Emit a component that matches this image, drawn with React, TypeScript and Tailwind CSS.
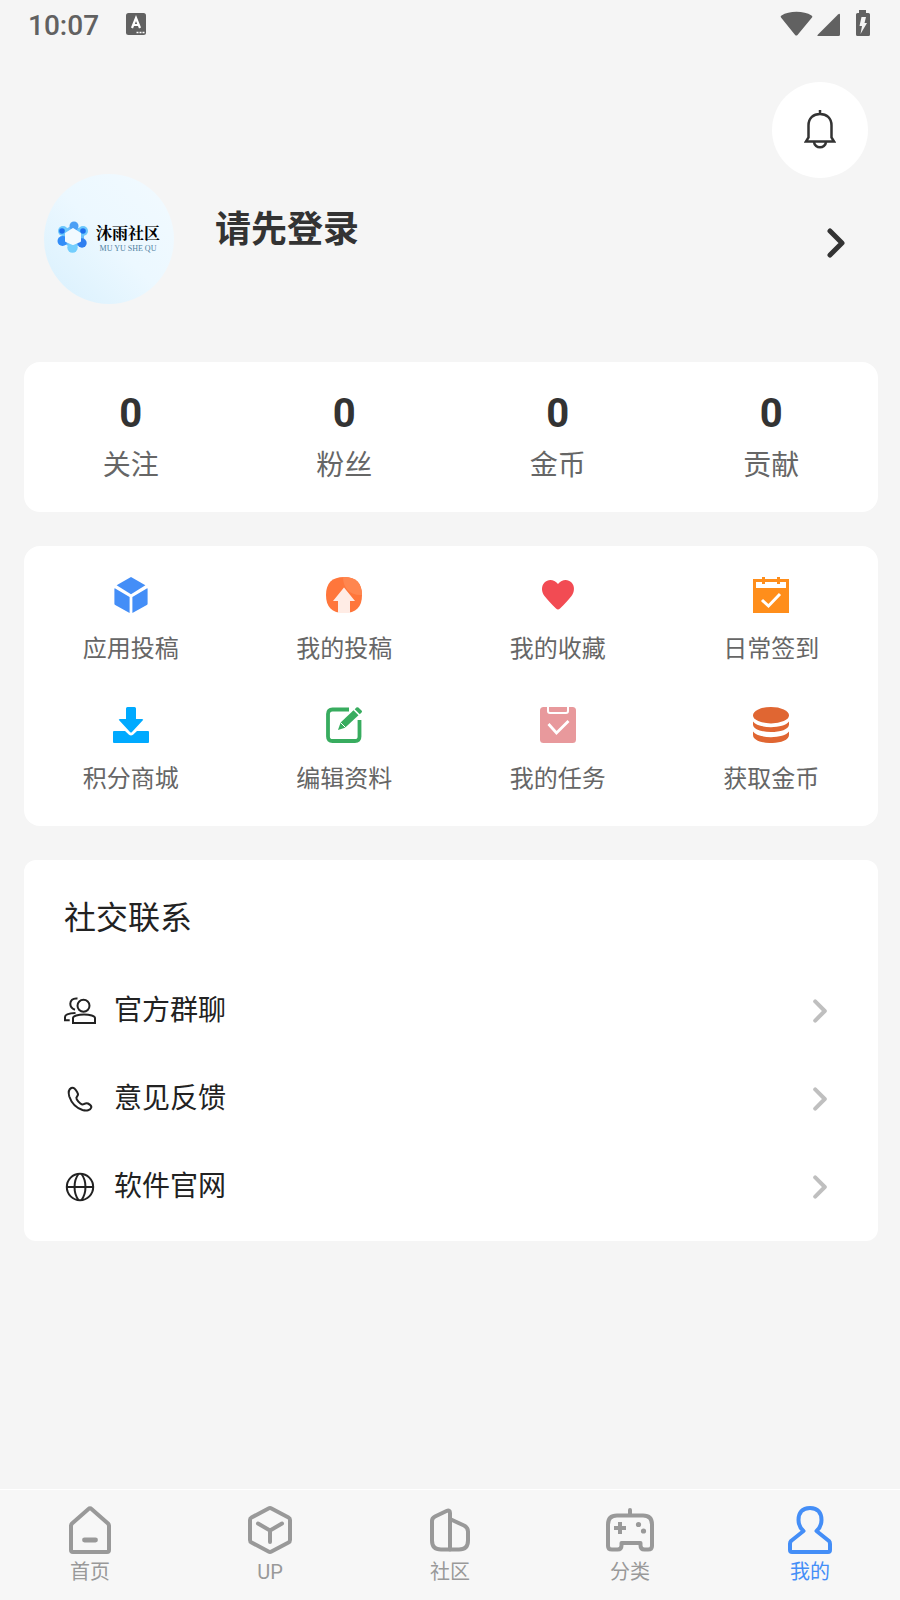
import type { ReactNode } from "react";

interface Item {
  label: string;
  icon: ReactNode;
}

const stats = [
  { label: "关注", value: 0 },
  { label: "粉丝", value: 0 },
  { label: "金币", value: 0 },
  { label: "贡献", value: 0 },
];

const actions: Item[] = [
  {
    label: "应用投稿",
    icon: (
      <g fill="#448ef7">
        <path d="M18 0 32.4 8.2 18 17.2 3.6 8.2z" />
        <path d="M2.2 11.4 16.6 20v16L2.2 28q-.8-.4-.8-1.200V12q0-1 .8-.6z" />
        <path d="M33.8 11.400 19.400 20v16l14.400-8q.8-.4.8-1.200V12q0-1-.8-.6z" />
      </g>
    ),
  },
  {
    label: "我的投稿",
    icon: (
      <>
        <path fill="#ff763b" d="M18 0C30 0 36 6 36 18s-6 18-18 18S0 30 0 18 6 0 18 0z" />
        <path fill="#ff864f" d="M17 0c12-.4 18.700 5 19 18C25 19 17 12 17 0z" />
        <path fill="#ffece5" d="M18 10.500 29 24h-5v12H12V24H7z" />
      </>
    ),
  },
  {
    label: "我的收藏",
    icon: (
      <path
        fill="#f24b53"
        d="M18 7C14 2 8 2 4.500 5.500 1 9 1.400 15 4.500 19c3 4 7.500 8.500 11.500 12.600q2 2 4 0c4-4.100 8.500-8.600 11.500-12.600 3.100-4 3.500-10 0-13.500C28 2 22 2 18 7z"
      />
    ),
  },
  {
    label: "日常签到",
    icon: (
      <>
        <path fill="#ff8e1b" d="M0 2h9V0h3v2h12V0h3v2h9v34H0z" />
        <path fill="#fff" d="M3 5h6v2h3V5h12v2h3V5h6v6H3z" />
        <path d="m9 23 6.500 6L27 17" fill="none" stroke="#fff" strokeWidth="3" />
      </>
    ),
  },
  {
    label: "积分商城",
    icon: (
      <g fill="#00aaff">
        <path d="M14.500 0h7q1.500 0 1.500 1.500V12h6q2 0 .6 1.600L19 25q-1 1-2 0L6.400 13.600Q5 12 7 12h6V1.500Q13 0 14.500 0z" />
        <path d="M1 24h11l4 3.700q2 1.500 4 0L24 24h11q1 0 1 1v10q0 1-1 1H1q-1 0-1-1V25q0-1 1-1z" />
      </g>
    ),
  },
  {
    label: "编辑资料",
    icon: (
      <>
        <path d="M23 2.500H6.500q-4.500 0-4.500 4.500v22.500q0 4.500 4.500 4.500h22.500q4.500 0 4.500-4.500V13" fill="none" stroke="#38ac5f" strokeWidth="3.800" />
        <path fill="#38ac5f" d="m12 23 2.600-7.500L27.500 3.300l5 5L19 20.700z" />
        <path fill="#38ac5f" d="M28.700 2.200 30.400.6q1-.9 2 0l3.100 3q1 1 0 2l-1.700 1.700z" />
        <path d="m14.400 15.400 5.200 5.200" stroke="#fff" strokeWidth="1" />
      </>
    ),
  },
  {
    label: "我的任务",
    icon: (
      <>
        <rect width="36" height="36" rx="3.500" fill="#e8999c" />
        <path d="M8 0v4q0 2 2 2h16q2 0 2-2V0" fill="none" stroke="#fff" strokeWidth="2" />
        <path d="m8.500 17 8 9L28.500 14" fill="none" stroke="#fff" strokeWidth="2.800" />
      </>
    ),
  },
  {
    label: "获取金币",
    icon: (
      <g fill="#e06632">
        <ellipse cx="18" cy="8.200" rx="18" ry="8.200" />
        <path d="M0 14.500c5 7.500 31 7.500 36 0v3c0 10-36 10-36 0z" />
        <path d="M0 24.500c5 7.500 31 7.500 36 0V28c0 10.700-36 10.700-36 0z" />
      </g>
    ),
  },
];

const contacts: Item[] = [
  {
    label: "官方群聊",
    icon: (
      <>
        <circle cx="19.500" cy="10.700" r="6" />
        <path d="M9 28v-5c0-2 5-3.500 11-3.500s11 1.500 11 3.500v5z" />
        <path d="M13.500 3.500c-5-.6-7.200 2-7.200 5.300 0 3 1.700 5 4.700 6M11.500 18C5 18.300 1 19.500 1 22v3.300h4.700" />
      </>
    ),
  },
  {
    label: "意见反馈",
    icon: (
      <path d="M7.300 5C4.500 6.500 4.300 10 5.300 13.500 7.500 20 12.500 25 18.500 27c4 1.200 8 .3 8.800-2.500.4-1.500-1-2.800-3.300-4-2-1-3 0-4.300.7-1 .6-2 .3-3.300-.7-1.700-1.300-2.700-2.500-3.700-4.300-.7-1.300-.5-2 .5-3s1.200-2 .2-3.700C11.500 6 9.500 3.800 7.300 5z" />
    ),
  },
  {
    label: "软件官网",
    icon: (
      <>
        <circle cx="16" cy="16" r="13.200" />
        <path d="M2.800 16h26.400M14.500 3c-5.300 7-5.300 19 0 26M17.500 3c5.300 7 5.300 19 0 26" />
      </>
    ),
  },
];

const tabs: Item[] = [
  {
    label: "首页",
    icon: (
      <>
        <path d="M22.500 3 6 17.500Q5 18.500 5 20v24q0 2 2 2h34q2 0 2-2V20q0-1.500-1-2.500L25.500 3Q24 1.500 22.500 3z" />
        <path d="M18.500 34h11" strokeWidth="4.800" />
      </>
    ),
  },
  {
    label: "UP",
    icon: (
      <>
        <path d="m22.500 2.500-17 9Q4 12.300 4 14v20q0 1.700 1.500 2.500l17 9q1.500.8 3 0l17-9Q44 35.700 44 34V14q0-1.700-1.500-2.500l-17-9q-1.500-.8-3 0z" />
        <path d="m12 17.500 12 7 12-7M24 24.500V36" />
      </>
    ),
  },
  {
    label: "社区",
    icon: (
      <>
        <path d="M24 43.500H15q-9 0-9-9V15q0-3 3-4.500l11.500-5.500Q24 3.500 24 7z" />
        <path d="m24 13 14 6.500q4 2 4 6v9q0 9-9 9H24" />
      </>
    ),
  },
  {
    label: "分类",
    icon: (
      <>
        <path d="M11 9.500h26q9 0 9 9V40q0 3.500-4 3.500h-3.500q-4 0-4-4V37h-19v2.500q0 4-4 4H6q-4 0-4-3.500V18.500q0-9 9-9zM24 4v5" />
        <path d="M14 16v12M8 22h12" strokeLinecap="butt" />
        <g fill="currentColor" stroke="none">
          <circle cx="32.500" cy="18.500" r="2.600" />
          <circle cx="37.500" cy="25" r="2.600" />
        </g>
      </>
    ),
  },
  {
    label: "我的",
    icon: (
      <path d="M24 2C16 2 12.500 7 12.500 14c0 4.500 1.500 8 5 11L5 35Q4 36 4 38v6q0 2 2 2h36q2 0 2-2v-6q0-2-1-3L30.500 25c3.500-3 5-6.500 5-11C35.500 7 32 2 24 2z" />
    ),
  },
];

function Chevron({ className }: { className: string }) {
  return (
    <svg viewBox="0 0 18 30" fill="none" stroke="currentColor" strokeLinecap="round" strokeLinejoin="round" className={className} aria-hidden="true">
      <path d="m3 3 12 12L3 27" strokeWidth="5" />
    </svg>
  );
}

function StatusBar() {
  return (
    <div className="flex h-[50px] items-start justify-between pt-2.5 pr-[30px] pl-7 text-[#616161]">
      <div className="flex items-center gap-[27px]">
        <span className="text-[28px] leading-8 font-medium">10:07</span>
        <svg viewBox="0 0 20 22" className="mb-1 h-[22px] w-5" aria-hidden="true">
          <rect width="20" height="22" rx="2.500" fill="currentColor" />
          <path d="m6 15 4-10 4 10M7.500 12h5" fill="none" stroke="#fff" strokeWidth="2.200" />
          <path d="M10.500 19.500h8" stroke="#fff" strokeWidth="1.500" strokeDasharray="2 1" />
        </svg>
      </div>
      <svg viewBox="0 0 90 26" fill="currentColor" className="h-[26px] w-[90px]" aria-hidden="true">
        <path d="M1.500 5.500C9 .5 24 .5 31.500 5.500 32.500 6 32.500 7 32 7.500L17.500 25q-1.200 1-2.400 0L1 7.500Q0 6 1.500 5.500z" />
        <path d="M60 5v19.500q0 1.500-1.500 1.500h-20q-2 0-.5-1.500L58 4.500q2-1.500 2 .5z" />
        <path d="M79 0h7v3h2.500q1.500 0 1.500 1.500v20q0 1.500-1.500 1.500h-11q-1.500 0-1.500-1.500v-20Q76 3 77.500 3H79z" />
        <path fill="#f5f5f5" d="M81.500 7H86l-1.500 6H87l-6.500 11L82 16h-2.500z" />
      </svg>
    </div>
  );
}

function Avatar() {
  return (
    <div className="flex size-[130px] shrink-0 items-center gap-[7px] rounded-full bg-linear-to-tr from-[#d8f0fd] via-[#ecf8ff] to-[#f2faff] pb-1 pl-[13px]">
      <svg viewBox="0 0 32 32" className="size-8 shrink-0" aria-hidden="true">
        <path d="M16 4 27 10v12l-11 5-11-5V10z" fill="#6cc0fb" />
        <circle cx="17" cy="5" r="4.500" fill="#4b9ff5" />
        <circle cx="6" cy="10" r="5" fill="#6cc8fc" />
        <circle cx="26" cy="10" r="5" fill="#6cc8fc" />
        <circle cx="5" cy="10" r="2.800" fill="#1e6fee" />
        <circle cx="26" cy="10" r="2.800" fill="#1e6fee" />
        <circle cx="5.500" cy="20" r="5" fill="#328df8" />
        <circle cx="25" cy="22" r="4.700" fill="#2f7ff0" />
        <circle cx="15.500" cy="26.500" r="5.200" fill="#73cefd" />
        <path d="m16 8 7 4.500v7.500L16 23l-7-3v-7.500z" fill="#f2faff" stroke="#f2faff" strokeWidth="2" strokeLinejoin="round" />
      </svg>
      <div className="pt-1 text-center font-['Noto_Serif_CJK_SC','Noto_Sans_CJK_SC',serif] whitespace-nowrap">
        <div className="text-[16px] leading-5 font-bold text-black">沐雨社区</div>
        <div className="font-['Liberation_Serif',serif] text-[8px] leading-3 text-[#4d7f9f]">MU YU SHE QU</div>
      </div>
    </div>
  );
}

export default function App() {
  return (
    <div className="flex min-h-screen flex-col bg-[#f5f5f5] font-[Roboto,'Noto_Sans_CJK_SC',sans-serif] text-[#333]" lang="zh-CN">
      <StatusBar />

      <header className="pt-8">
        <div className="flex justify-end pr-8">
          <button type="button" aria-label="通知" className="flex size-24 items-center justify-center rounded-full bg-white">
            <svg viewBox="0 0 32 40" fill="none" stroke="currentColor" strokeWidth="2.500" className="h-10 w-8" aria-hidden="true">
              <path d="M16 0v4M4.500 27.500V15.500C4.500 8 9.500 4 16 4S27.500 8 27.500 15.500V27.500l2.500 4H2z" />
              <path d="M10 32c.8 7 11.200 7 12 0" />
            </svg>
          </button>
        </div>
        <a href="#login" className="-mt-1 flex items-start pr-[55px] pl-11">
          <Avatar />
          <span className="ml-[41px] flex-1 pt-9 text-[36px] leading-10 font-bold">请先登录</span>
          <Chevron className="mt-2 h-[30px] w-[18px] self-center" />
        </a>
      </header>

      <main className="flex flex-col gap-[34px] pt-[58px] pr-[22px] pb-8 pl-6">
        <section className="grid grid-cols-4 rounded-2xl bg-white pt-8 pb-[26px]">
          {stats.map((s) => (
            <a key={s.label} href="#stats" className="flex flex-col items-center gap-3">
              <span className="text-[40px] leading-10 font-bold">{s.value}</span>
              <span className="text-[28px] leading-10 text-[#666]">{s.label}</span>
            </a>
          ))}
        </section>

        <section className="grid grid-cols-4 gap-y-[42px] rounded-2xl bg-white pt-[31px] pb-[31px]">
          {actions.map((a) => (
            <button key={a.label} type="button" className="flex flex-col items-center gap-5 text-[#666]">
              <svg viewBox="0 0 36 36" className="size-9" aria-hidden="true">
                {a.icon}
              </svg>
              <span className="text-[24px] leading-8">{a.label}</span>
            </button>
          ))}
        </section>

        <section className="rounded-xl bg-white px-10 pt-[38px] pb-[10px] text-[#222]">
          <h2 className="mb-[29px] text-[32px] leading-10">社交联系</h2>
          {contacts.map((c) => (
            <a key={c.label} href="#contact" className="flex h-[88px] items-center gap-[18px] pr-[10px]">
              <svg viewBox="0 0 32 32" fill="none" stroke="currentColor" strokeWidth="2" className="size-8" aria-hidden="true">
                {c.icon}
              </svg>
              <span className="flex-1 text-[28px] leading-10">{c.label}</span>
              <Chevron className="h-6 w-4 text-[#bfbfbf]" />
            </a>
          ))}
        </section>
      </main>

      <nav className="mt-auto grid grid-cols-5 border-t border-white bg-[#f7f7f7] pt-4 pb-[15px]">
        {tabs.map((t) => (
          <a
            key={t.label}
            href="#tab"
            aria-current={t.label === "我的" ? "page" : undefined}
            className="flex flex-col items-center gap-[5px] text-[#999] aria-[current=page]:text-[#448ef7]"
          >
            <svg viewBox="0 0 48 48" fill="none" stroke="currentColor" strokeWidth="4" strokeLinecap="round" strokeLinejoin="round" className="size-12" aria-hidden="true">
              {t.icon}
            </svg>
            <span className="text-[20px] leading-[26px]">{t.label}</span>
          </a>
        ))}
      </nav>
    </div>
  );
}
